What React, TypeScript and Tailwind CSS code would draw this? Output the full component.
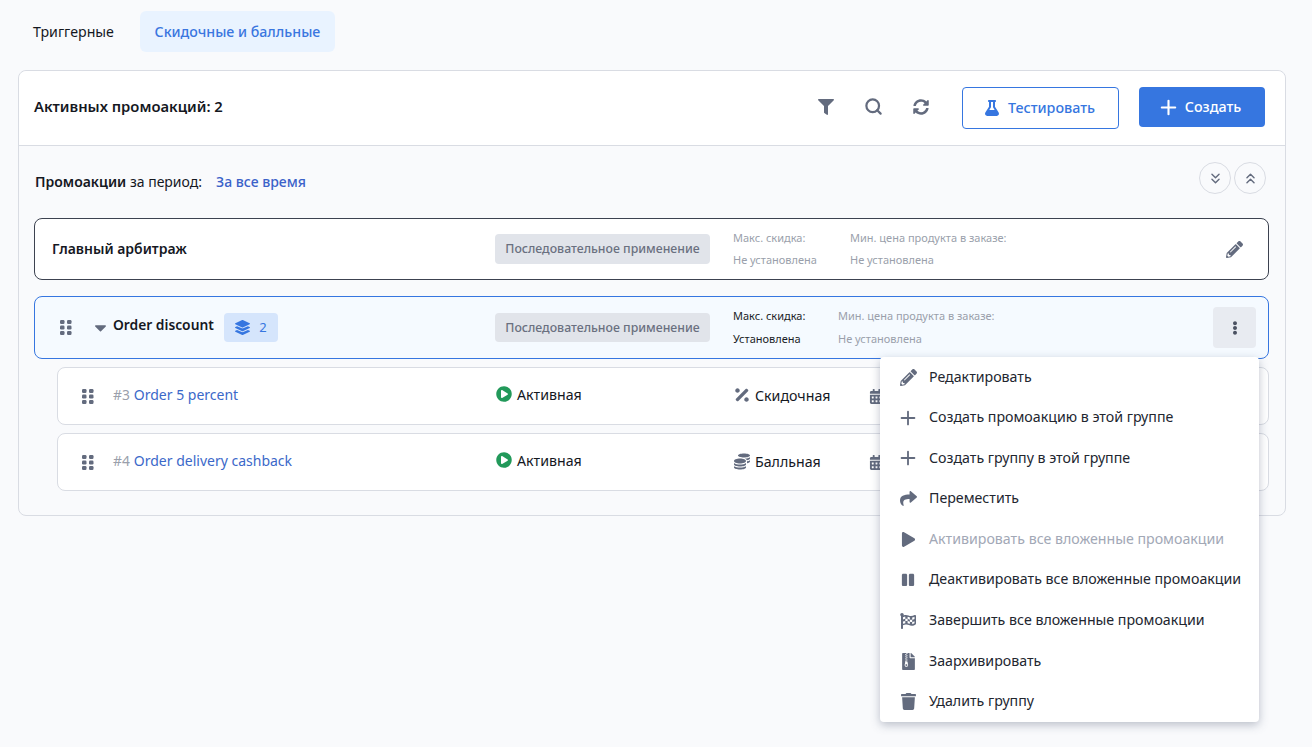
import React from "react";
import {
  FaFilter, FaSyncAlt, FaFlask, FaCaretDown, FaLayerGroup, FaPlayCircle,
  FaPercentage, FaCoins, FaCalendarAlt, FaEllipsisV, FaShare, FaPlay, FaPause, FaFlagCheckered,
  FaFileArchive, FaTrash, FaPencilAlt,
} from "react-icons/fa";
import { ChevronsDown, ChevronsUp, Plus, Search } from "lucide-react";

const Grip = () => (
  <svg width="12" height="15" viewBox="0 0 12 15" fill="#636b7e" className="shrink-0">
    <rect x="0" y="0" width="4.5" height="4" rx="1.2" /><rect x="7" y="0" width="4.5" height="4" rx="1.2" />
    <rect x="0" y="5.5" width="4.5" height="4" rx="1.2" /><rect x="7" y="5.5" width="4.5" height="4" rx="1.2" />
    <rect x="0" y="11" width="4.5" height="4" rx="1.2" /><rect x="7" y="11" width="4.5" height="4" rx="1.2" />
  </svg>
);

const Pill = ({ h }: { h: string }) => (
  <div className={`${h} w-[215px] shrink-0 rounded-[4px] bg-[#e1e4ea] flex items-center justify-center pt-[1px] text-[12.3px] font-medium text-[#6a7080]`}>
    Последовательное применение
  </div>
);

const Info = ({ a, b, w, gap, dark }: { a: string; b: string; w: string; gap: string; dark?: boolean }) => (
  <div className={`${w} ${gap} shrink-0 flex flex-col text-[11px] leading-[14px] ${dark ? "text-[#1a1d26]" : "text-[#9a9fab]"}`}>
    <span>{a}</span>
    <span>{b}</span>
  </div>
);

const Child = ({ n, name, icon, type }: { n: string; name: string; icon: React.ReactNode; type: string }) => (
  <div className="ml-[23px] h-[58px] rounded-[8px] border border-[#d9dce3] bg-white flex items-center pl-[23px]">
    <div className="ml-[1px]"><Grip /></div>
    <div className="w-[383px] ml-[19px] mb-[3px] shrink-0 whitespace-nowrap">
      <span className="text-[#9a9fab] text-[13.8px]">{n}</span>
      <span className="ml-[4px] text-[#3b68c9] text-[14px]">{name}</span>
    </div>
    <div className="w-[238px] mb-[3px] shrink-0 flex items-center gap-[5px] text-[#15181f]">
      <FaPlayCircle className="text-[#22995a] text-[16px]" />
      <span>Активная</span>
    </div>
    <div className="w-[135px] mb-[1px] shrink-0 flex items-center gap-[5px] text-[#15181f]">
      <span className="w-[16px] flex justify-center text-[#636b7e]">{icon}</span>
      <span>{type}</span>
    </div>
    <FaCalendarAlt className="text-[#636b7e] text-[15px]" />
  </div>
);

const items: { icon: React.ReactNode; label: string; off?: boolean }[] = [
  { icon: <FaPencilAlt className="text-[17px]" />, label: "Редактировать" },
  { icon: <Plus size={22} strokeWidth={2} className="-m-[2px]" />, label: "Создать промоакцию в этой группе" },
  { icon: <Plus size={22} strokeWidth={2} className="-m-[2px]" />, label: "Создать группу в этой группе" },
  { icon: <FaShare className="text-[17px]" />, label: "Переместить" },
  { icon: <FaPlay className="text-[15px]" />, label: "Активировать все вложенные промоакции", off: true },
  { icon: <FaPause className="text-[14px]" />, label: "Деактивировать все вложенные промоакции" },
  { icon: <FaFlagCheckered className="text-[16px]" />, label: "Завершить все вложенные промоакции" },
  { icon: <FaFileArchive className="text-[17px]" />, label: "Заархивировать" },
  { icon: <FaTrash className="text-[17px]" />, label: "Удалить группу" },
];

export default function App() {
  return (
    <div className="relative min-h-[747px] bg-[#f9fafc] font-['Noto_Sans','Liberation_Sans',sans-serif] text-[14.2px] text-[#15181f] overflow-hidden">
      <div className="pt-[11px] pl-[18px] flex items-center h-[70px] pb-[18px]">
        <div className="pl-[15px] pr-[14px] h-[41px] flex items-center">Триггерные</div>
        <div className="ml-[12px] w-[195px] justify-center h-[41px] flex items-center rounded-[6px] bg-[#e9f3ff] text-[#3a76e0] font-medium">
          Скидочные и балльные
        </div>
      </div>

      <div className="mx-[18px] w-[1268px] h-[446px] rounded-[8px] border border-[#d9dce3]">
        <div className="h-[75px] bg-white rounded-t-[8px] border-b border-[#d9dce3] flex items-center pl-[15px] pr-[20px]">
          <div className="font-semibold text-[14.8px] mb-[4px]">Активных промоакций: 2</div>
          <div className="ml-auto mb-[3px] flex items-center text-[#636b7e]">
            <FaFilter className="text-[16px]" />
            <Search size={19} strokeWidth={2.8} className="ml-[30px]" />
            <FaSyncAlt className="ml-[30px] text-[16px]" />
          </div>
          <button className="ml-[33px] w-[157px] h-[42px] rounded-[4px] border border-[#3676e0] bg-white text-[#3676e0] text-[14.3px] flex items-center justify-center gap-[8px] pr-[2px] font-medium">
            <FaFlask className="text-[16px]" /> <span className="mb-[1px]">Тестировать</span>
          </button>
          <button className="ml-[20px] -mt-[2px] w-[126px] h-[40px] rounded-[4px] bg-[#3676e0] text-white text-[14.3px] flex items-center justify-center gap-[7px] pr-[4px] font-medium">
            <Plus size={23} strokeWidth={2.2} className="-m-[2px]" /> <span className="mb-[1px]">Создать</span>
          </button>
        </div>

        <div className="pl-[15px] pr-[16px]">
          <div className="h-[72px] flex items-center text-[14px]">
            <div className="mb-[2px] ml-[1px]"><span className="font-semibold">Промоакции</span> за период:</div>
            <div className="ml-[14px] mb-[2px] font-medium text-[#3b62c9]">За все время</div>
            <div className="ml-auto mr-[3px] mb-[8px] flex gap-[3px]">
              <div className="w-[32px] h-[32px] rounded-full border border-[#d9dce3] flex items-center justify-center text-[#636b7e]"><ChevronsDown size={17} strokeWidth={2} /></div>
              <div className="w-[32px] h-[32px] rounded-full border border-[#d9dce3] flex items-center justify-center text-[#636b7e]"><ChevronsUp size={17} strokeWidth={2} /></div>
            </div>
          </div>

          <div className="h-[62px] rounded-[8px] border border-[#3c4250] bg-white flex items-center pl-[17px] pr-[25px]">
            <div className="w-[443px] mb-[2px] shrink-0 font-semibold text-[14px]">Главный арбитраж</div>
            <div className="mb-[1px]"><Pill h="h-[30px]" /></div>
            <div className="ml-[23px] flex">
              <Info a="Макс. скидка:" b="Не установлена" w="w-[117px]" gap="gap-[8px]" />
              <Info a="Мин. цена продукта в заказе:" b="Не установлена" w="w-[180px]" gap="gap-[8px]" />
            </div>
            <FaPencilAlt className="ml-auto text-[#636b7e] text-[17px]" />
          </div>

          <div className="mt-[16px] h-[63px] rounded-[8px] border border-[#3676e0] bg-[#f5faff] flex items-center pl-[25px] pr-[12px]">
            <div className="w-[435px] shrink-0 flex items-center">
              <Grip />
              <FaCaretDown className="ml-[19px] text-[#636b7e] text-[19px]" />
              <div className="ml-[3px] mb-[4px] font-semibold text-[13.8px]">Order discount</div>
              <div className="ml-[10px] w-[54px] h-[29px] rounded-[4px] bg-[#d5e5fc] flex items-center justify-center gap-[9px] text-[#3676e0] text-[13px]">
                <FaLayerGroup className="text-[15px]" /> 2
              </div>
            </div>
            <Pill h="h-[29px]" />
            <div className="ml-[23px] flex">
              <Info a="Макс. скидка:" b="Установлена" w="w-[105px]" gap="gap-[9px]" dark />
              <Info a="Мин. цена продукта в заказе:" b="Не установлена" w="w-[180px]" gap="gap-[9px]" />
            </div>
            <div className="ml-auto w-[43px] h-[41px] rounded-[4px] bg-[#e8ebf1] flex items-center justify-center text-[#4b5262] text-[14px]">
              <FaEllipsisV />
            </div>
          </div>

          <div className="mt-[8px] flex flex-col gap-[8px]">
            <Child n="#3" name="Order 5 percent" icon={<FaPercentage className="text-[18px]" />} type="Скидочная" />
            <Child n="#4" name="Order delivery cashback" icon={<FaCoins className="text-[17px]" />} type="Балльная" />
          </div>
        </div>
      </div>

      <div className="absolute left-[880px] top-[357px] w-[379px] h-[365px] bg-white rounded-[4px] shadow-[0_3px_10px_rgba(70,80,110,0.35)] flex flex-col justify-between">
        {items.map((it) => (
          <div key={it.label} className="h-[40.5px] flex items-center pl-[19px]">
            <span className="w-[18px] flex justify-center text-[#636b7e]">{it.icon}</span>
            <span className={`ml-[12px] mb-[2px] whitespace-nowrap ${it.off ? "text-[#a2a8b6]" : "text-[#22262f]"}`}>{it.label}</span>
          </div>
        ))}
      </div>
    </div>
  );
}
